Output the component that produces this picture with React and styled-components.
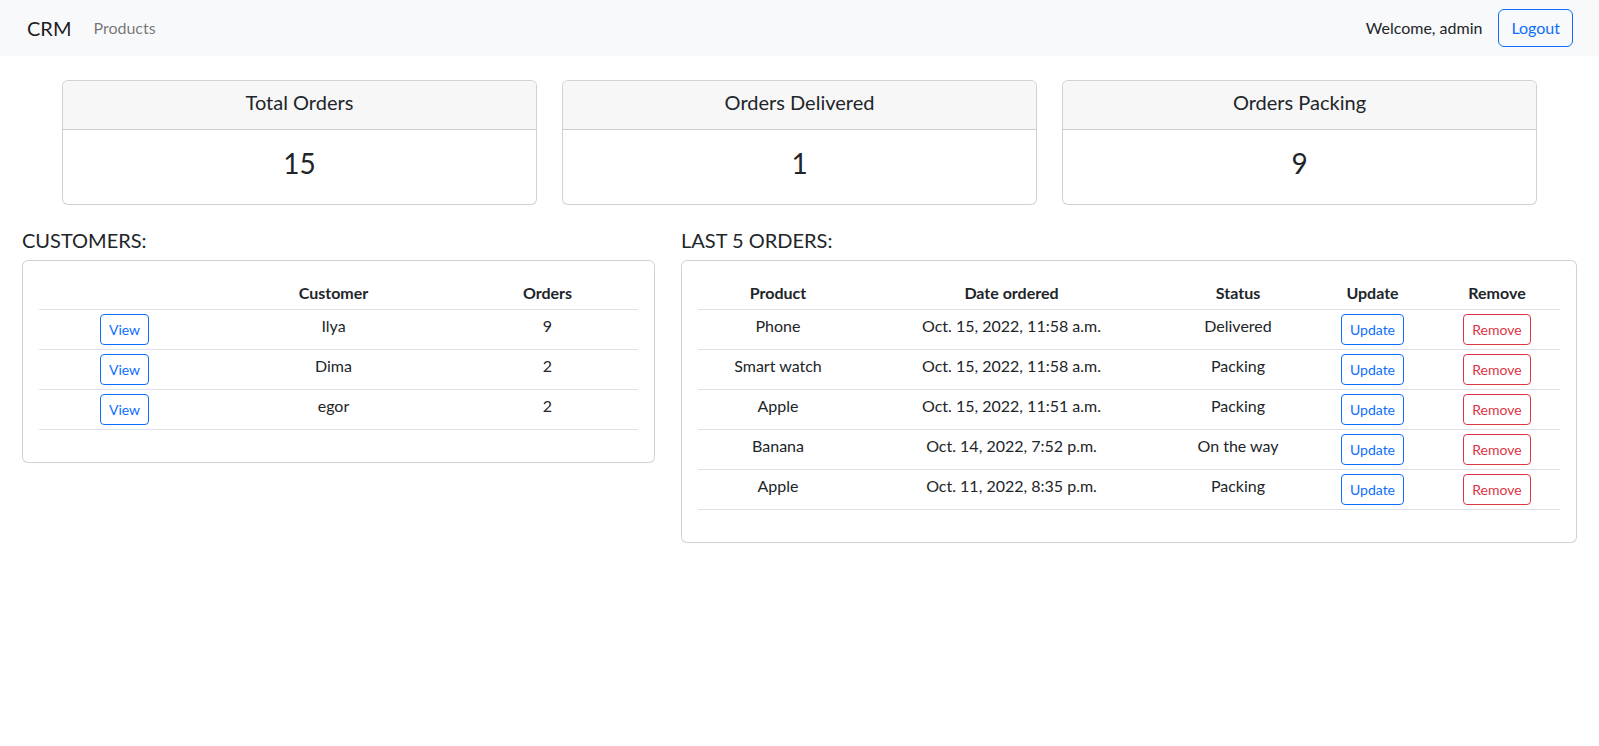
import React from "react";
import styled, { createGlobalStyle } from "styled-components";

const GlobalStyle = createGlobalStyle`
  * { box-sizing: border-box; }
  html, body { margin: 0; padding: 0; background: #fff; }
  body {
    font-family: "Segoe UI", Lato, "Noto Sans", sans-serif;
    font-size: 16px;
    line-height: 1.5;
    color: #212529;
  }
`;

const Navbar = styled.nav`
  height: 56px;
  background: #f8f9fa;
  display: flex;
  align-items: center;
  justify-content: space-between;
  padding: 0 26px 0 27px;
`;

const NavLeft = styled.div`
  display: flex;
  align-items: center;
`;

const Brand = styled.a`
  font-size: 20px;
  line-height: 30px;
  padding: 5px 0;
  margin-right: 14px;
  color: rgba(0, 0, 0, 0.9);
  text-decoration: none;
`;

const NavLink = styled.a`
  padding: 8px;
  color: rgba(0, 0, 0, 0.55);
  text-decoration: none;
`;

const NavRight = styled.div`
  display: flex;
  align-items: center;
  gap: 16px;
`;

const Welcome = styled.span`
  color: #212529;
`;

const Button = styled.button`
  font-family: inherit;
  display: inline-block;
  background: transparent;
  cursor: pointer;
  color: ${(p) => p.$color};
  border: 1px solid ${(p) => p.$color};
  font-size: ${(p) => (p.$small ? "14px" : "16px")};
  line-height: ${(p) => (p.$small ? "21px" : "24px")};
  padding: ${(p) => (p.$small ? "4px 8px" : "6px 12px")};
  border-radius: ${(p) => (p.$small ? "4px" : "6px")};
`;

const StatsRow = styled.div`
  display: grid;
  grid-template-columns: repeat(3, 475px);
  column-gap: 25px;
  justify-content: center;
  padding-top: 24px;
`;

const Card = styled.div`
  border: 1px solid rgba(0, 0, 0, 0.175);
  border-radius: 6px;
  background: #fff;
  overflow: hidden;
`;

const StatHeader = styled.div`
  background: #f7f7f7;
  border-bottom: 1px solid rgba(0, 0, 0, 0.175);
  padding: 9px 16px 15px;
  font-size: 20px;
  line-height: 24px;
  text-align: center;
`;

const StatValue = styled.div`
  padding: 16px 16px 24px;
  font-size: 28px;
  line-height: 34px;
  text-align: center;
`;

const BottomRow = styled.div`
  display: grid;
  grid-template-columns: 633px 896px;
  column-gap: 26px;
  align-items: start;
  padding: 23px 0 0 22px;
`;

const SectionTitle = styled.h5`
  margin: 0 0 8px;
  font-size: 20px;
  line-height: 24px;
  font-weight: 400;
`;

const CardBody = styled.div`
  padding: 16px 16px 32px;
`;

const Table = styled.table`
  width: 100%;
  border-collapse: collapse;
  table-layout: fixed;
  vertical-align: top;
`;

const Th = styled.th`
  padding: 4px;
  font-weight: 700;
  text-align: center;
  line-height: 24px;
  border-bottom: 1px solid #dee2e6;
`;

const Td = styled.td`
  padding: 4px;
  text-align: center;
  line-height: 24px;
  vertical-align: top;
  border-bottom: 1px solid #dee2e6;
`;

const stats = [
  { title: "Total Orders", value: 15 },
  { title: "Orders Delivered", value: 1 },
  { title: "Orders Packing", value: 9 },
];

const customers = [
  { name: "Ilya", orders: 9 },
  { name: "Dima", orders: 2 },
  { name: "egor", orders: 2 },
];

const orders = [
  { product: "Phone", date: "Oct. 15, 2022, 11:58 a.m.", status: "Delivered" },
  { product: "Smart watch", date: "Oct. 15, 2022, 11:58 a.m.", status: "Packing" },
  { product: "Apple", date: "Oct. 15, 2022, 11:51 a.m.", status: "Packing" },
  { product: "Banana", date: "Oct. 14, 2022, 7:52 p.m.", status: "On the way" },
  { product: "Apple", date: "Oct. 11, 2022, 8:35 p.m.", status: "Packing" },
];

const BLUE = "#0d6efd";
const RED = "#dc3545";

export default function App() {
  return (
    <>
      <GlobalStyle />
      <Navbar>
        <NavLeft>
          <Brand href="#">CRM</Brand>
          <NavLink href="#">Products</NavLink>
        </NavLeft>
        <NavRight>
          <Welcome>Welcome, admin</Welcome>
          <Button $color={BLUE}>Logout</Button>
        </NavRight>
      </Navbar>

      <StatsRow>
        {stats.map((s) => (
          <Card key={s.title}>
            <StatHeader>{s.title}</StatHeader>
            <StatValue>{s.value}</StatValue>
          </Card>
        ))}
      </StatsRow>

      <BottomRow>
        <div>
          <SectionTitle>CUSTOMERS:</SectionTitle>
          <Card>
            <CardBody>
              <Table>
                <colgroup>
                  <col style={{ width: "171px" }} />
                  <col style={{ width: "247px" }} />
                  <col />
                </colgroup>
                <thead>
                  <tr>
                    <Th></Th>
                    <Th>Customer</Th>
                    <Th>Orders</Th>
                  </tr>
                </thead>
                <tbody>
                  {customers.map((c) => (
                    <tr key={c.name}>
                      <Td>
                        <Button $small $color={BLUE}>View</Button>
                      </Td>
                      <Td>{c.name}</Td>
                      <Td>{c.orders}</Td>
                    </tr>
                  ))}
                </tbody>
              </Table>
            </CardBody>
          </Card>
        </div>

        <div>
          <SectionTitle>LAST 5 ORDERS:</SectionTitle>
          <Card>
            <CardBody>
              <Table>
                <colgroup>
                  <col style={{ width: "160px" }} />
                  <col style={{ width: "307px" }} />
                  <col style={{ width: "146px" }} />
                  <col style={{ width: "123px" }} />
                  <col />
                </colgroup>
                <thead>
                  <tr>
                    <Th>Product</Th>
                    <Th>Date ordered</Th>
                    <Th>Status</Th>
                    <Th>Update</Th>
                    <Th>Remove</Th>
                  </tr>
                </thead>
                <tbody>
                  {orders.map((o, i) => (
                    <tr key={i}>
                      <Td>{o.product}</Td>
                      <Td>{o.date}</Td>
                      <Td>{o.status}</Td>
                      <Td>
                        <Button $small $color={BLUE}>Update</Button>
                      </Td>
                      <Td>
                        <Button $small $color={RED}>Remove</Button>
                      </Td>
                    </tr>
                  ))}
                </tbody>
              </Table>
            </CardBody>
          </Card>
        </div>
      </BottomRow>
    </>
  );
}
